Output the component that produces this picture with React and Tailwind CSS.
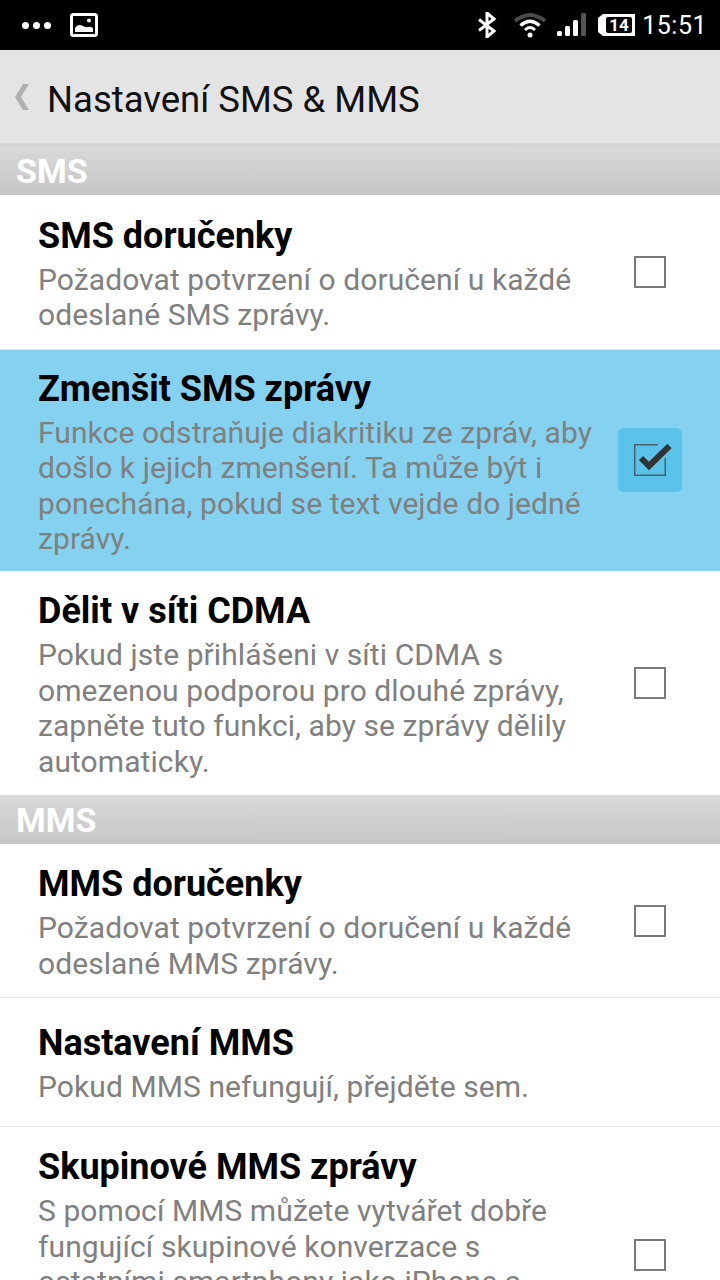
import React from 'react'

function Check({ checked }) {
  if (checked) {
    return (
      <div className="-mt-[1px] flex h-16 w-16 items-center justify-center rounded-md bg-[#5bc2ea]">
        <svg width="40" height="40" viewBox="0 0 40 40" className="overflow-visible">
          <path d="M28 4.750H4.750V35.250H35.250V18" fill="none" stroke="#4a6270" strokeWidth="1.500" />
          <path d="M11 18L19 26L39.500 6" fill="none" stroke="#333333" strokeWidth="6" />
        </svg>
      </div>
    )
  }
  return <div className="h-8 w-8 border-2 border-[#7a7a7a] bg-white" />
}

function Row({ title, text, check, checked, active, border, className, textClass }) {
  return (
    <div className={`flex shrink-0 items-center pl-[38px] pr-[38px] ${active ? 'bg-[#84d2f0]' : 'bg-white'} ${border ? 'border-b border-[#e4e4e4]' : ''} ${className}`}>
      <div className={`min-w-0 flex-1 ${textClass || ''}`}>
        <h2 className="text-[36px] font-bold leading-[48px] text-black">{title}</h2>
        <p className="mt-[2px] text-[30px] leading-[35.500px] tracking-[0.080px] text-[#808080] whitespace-pre-line">{text}</p>
      </div>
      {check && (
        <div className="flex w-16 shrink-0 items-center justify-center">
          <Check checked={checked} />
        </div>
      )}
    </div>
  )
}

function Section({ label }) {
  return (
    <div className="flex h-[49px] shrink-0 items-center bg-gradient-to-b from-[#d9d9d9] to-[#c6c6c6] pl-4 pt-[2px] text-[34px] font-bold text-white">
      {label}
    </div>
  )
}

export default function App() {
  return (
    <div className="flex h-[1280px] w-[720px] flex-col overflow-hidden bg-white font-['Roboto',sans-serif]">
      <div className="flex h-[50px] shrink-0 items-center justify-between bg-black pl-[22px] pr-[13px] text-white">
        <div className="flex items-center gap-[19px]">
          <div className="flex gap-[4px]">
            <span className="h-[7px] w-[7px] rounded-full bg-white" />
            <span className="h-[7px] w-[7px] rounded-full bg-white" />
            <span className="h-[7px] w-[7px] rounded-full bg-white" />
          </div>
          <svg width="28" height="24" viewBox="0 0 28 24">
            <rect x="1.500" y="1.500" width="25" height="21" rx="2" fill="none" stroke="#fff" strokeWidth="3" />
            <path d="M5 19V15Q8 10 13 13Q16 15 18 14T23 15V19Z" fill="#fff" />
            <circle cx="19" cy="7.500" r="2" fill="#fff" />
          </svg>
        </div>
        <div className="flex items-center">
          <svg width="20" height="26" viewBox="0 0 20 26" className="mr-[16px]">
            <path d="M2 7.500L17 19L10 25V1L17 7L2 18.500" fill="none" stroke="#fff" strokeWidth="3" />
          </svg>
          <svg width="34" height="26" viewBox="0 0 34 26" className="mr-[9px]">
            <path d="M2 9Q17 -3 32 9" fill="none" stroke="#4a4a4a" strokeWidth="4" />
            <path d="M7.500 13.500Q17 5 26.500 13.500" fill="none" stroke="#fff" strokeWidth="3.500" />
            <path d="M12 18Q17 13 22 18" fill="none" stroke="#fff" strokeWidth="3" />
            <circle cx="17" cy="23" r="2.500" fill="#fff" />
          </svg>
          <svg width="30" height="24" viewBox="0 0 30 24" className="mr-[11px]">
            <rect x="1" y="18" width="5" height="5" rx="1.500" fill="#fff" />
            <rect x="9" y="13" width="5" height="10" rx="1.500" fill="#fff" />
            <rect x="17" y="7" width="5" height="16" rx="1.500" fill="#fff" />
            <rect x="25" y="0" width="5" height="23" rx="1.500" fill="#555" />
          </svg>
          <svg width="40" height="24" viewBox="0 0 40 24" className="mr-[5px]">
            <path d="M6 1H38V23H6L1 19V5Z" fill="#fff" />
            <rect x="9" y="4" width="26" height="16" rx="2" fill="#000" />
            <text x="22" y="18" textAnchor="middle" fontFamily="Roboto" fontWeight="700" fontSize="17" fill="#fff">14</text>
          </svg>
          <span className="text-[25px] leading-none tracking-[0.500px]">15:51</span>
        </div>
      </div>

      <div className="flex h-[96px] shrink-0 items-center border-b-[3px] border-[#d4d4d4] bg-[#e4e4e4] pt-[8px]">
        <svg width="16" height="30" viewBox="0 0 16 30" className="ml-[14px] -mt-[8px]">
          <path d="M15 2L7 15L15 28H9L1 15L9 2Z" fill="#b0b0b0" />
        </svg>
        <span className="ml-[17px] text-[36.500px] text-[#111]">Nastavení SMS &amp; MMS</span>
      </div>

      <Section label="SMS" />
      <Row className="h-[155px]" border check title="SMS doručenky" text={'Požadovat potvrzení o doručení u každé\nodeslané SMS zprávy.'} />
      <Row className="h-[221px]" active check checked title="Zmenšit SMS zprávy" text={'Funkce odstraňuje diakritiku ze zpráv, aby\ndošlo k jejich zmenšení. Ta může být i\nponechána, pokud se text vejde do jedné\nzprávy.'} />
      <Row className="h-[224px]" check title="Dělit v síti CDMA" text={'Pokud jste přihlášeni v síti CDMA s\nomezenou podporou pro dlouhé zprávy,\nzapněte tuto funkci, aby se zprávy dělily\nautomaticky.'} />
      <Section label="MMS" />
      <Row className="h-[154px]" border check title="MMS doručenky" text={'Požadovat potvrzení o doručení u každé\nodeslané MMS zprávy.'} />
      <Row className="h-[129px]" border title="Nastavení MMS" text="Pokud MMS nefungují, přejděte sem." />
      <Row className="h-[256px]" textClass="self-start pt-4" check title="Skupinové MMS zprávy" text={'S pomocí MMS můžete vytvářet dobře\nfungující skupinové konverzace s\nostatními smartphony jako iPhone a\nzařízeními Android.'} />
    </div>
  )
}
